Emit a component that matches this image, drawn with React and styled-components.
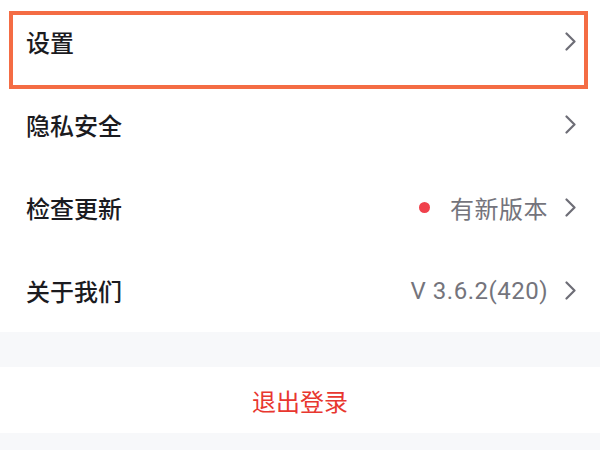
import React from "react";
import styled, { createGlobalStyle } from "styled-components";

const GlobalStyle = createGlobalStyle`
  * { box-sizing: border-box; }
  html, body, #root { margin: 0; height: 100%; }
  body {
    background: #f7f8fa;
    font-family: "Noto Sans CJK SC", "Noto Sans", sans-serif;
    overflow: hidden;
  }
`;

const items = [
  { label: "设置", highlight: true },
  { label: "隐私安全" },
  { label: "检查更新", value: "有新版本", dot: true },
  { label: "关于我们", value: "V 3.6.2(420)" },
];

export default function App() {
  return (
    <>
      <GlobalStyle />
      <Page>
        <List>
          {items.map((it) => (
            <Row key={it.label} $highlight={it.highlight}>
              <Label>{it.label}</Label>
              <Right>
                {it.dot && <Dot />}
                {it.value && <Value>{it.value}</Value>}
                <Chevron />
              </Right>
            </Row>
          ))}
        </List>
        <Gap />
        <Logout type="button">退出登录</Logout>
      </Page>
    </>
  );
}

function Chevron() {
  return (
    <ChevronSvg viewBox="0 0 11 19" aria-hidden="true">
      <polyline points="1.5,1.5 9.5,9.5 1.5,17.5" />
    </ChevronSvg>
  );
}

/* ===== styled ===== */
const Page = styled.div`
  width: 600px;
  display: flex;
  flex-direction: column;
`;

const List = styled.div`
  background: #fff;
  display: flex;
  flex-direction: column;
`;

const Row = styled.div`
  position: relative;
  height: 83px;
  display: flex;
  align-items: center;
  justify-content: space-between;
  padding: 0 24px 0 26px;

  ${(p) =>
    p.$highlight &&
    `
    &::after {
      content: "";
      position: absolute;
      top: 11px;
      left: 9px;
      right: 12px;
      bottom: -6px;
      border: 4px solid #f46c44;
      pointer-events: none;
    }
  `}
`;

const Label = styled.span`
  font-size: 24px;
  font-weight: 500;
  color: #1b1b1f;
`;

const Right = styled.div`
  display: flex;
  align-items: center;
`;

const Dot = styled.span`
  width: 11px;
  height: 11px;
  border-radius: 50%;
  background: #f0414c;
  margin-right: 20px;
`;

const Value = styled.span`
  font-family: Roboto, "Noto Sans CJK SC", sans-serif;
  font-size: 24px;
  letter-spacing: 0.5px;
  color: #74747c;
  margin-right: 17px;
`;

const ChevronSvg = styled.svg`
  width: 11px;
  height: 19px;
  fill: none;
  stroke: #6d6d76;
  stroke-width: 2.2;
  stroke-linecap: round;
  stroke-linejoin: round;
`;

const Gap = styled.div`
  height: 35px;
  background: #f7f8fa;
`;

const Logout = styled.button`
  height: 66px;
  width: 100%;
  border: 0;
  background: #fff;
  color: #e8372f;
  font-family: inherit;
  font-size: 24px;
  display: grid;
  place-items: center;
  cursor: pointer;
`;
